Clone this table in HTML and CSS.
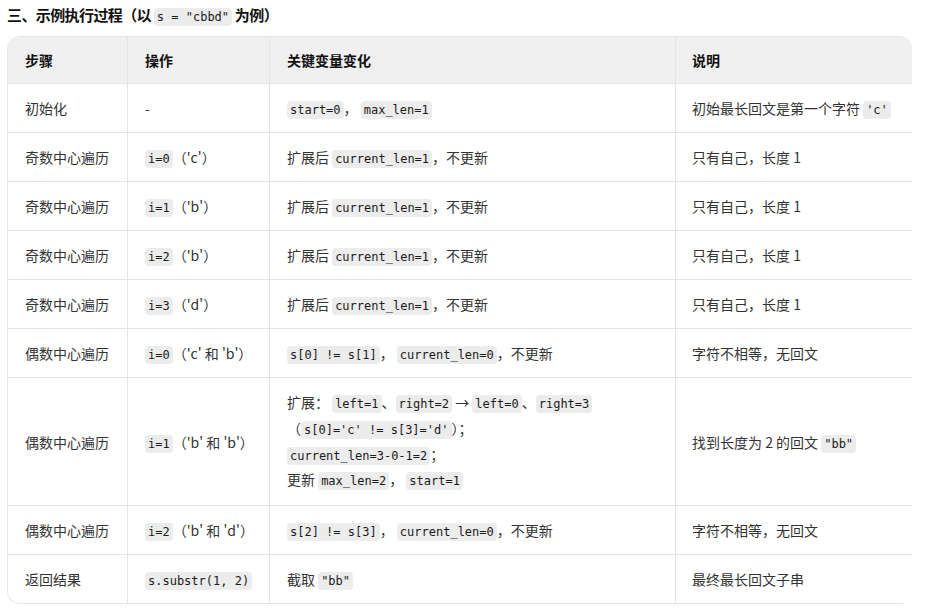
FILE: index.html
```html
<!DOCTYPE html>
<html lang="zh">
<head>
<meta charset="utf-8">
<link rel="stylesheet" href="styles.css">
</head>
<body>
<h3 class="title">三、示例执行过程（以 <code>s = "cbbd"</code> 为例）</h3>
<div class="wrap">
<table class="tbl">
<colgroup>
<col class="c1"><col class="c2"><col class="c3"><col class="c4">
</colgroup>
<thead>
<tr><th>步骤</th><th>操作</th><th>关键变量变化</th><th>说明</th></tr>
</thead>
<tbody>
<tr><td>初始化</td><td>-</td><td><code>start=0</code>， <code>max_len=1</code></td><td>初始最长回文是第一个字符 <code>'c'</code></td></tr>
<tr><td>奇数中心遍历</td><td><code>i=0</code>（'c'）</td><td>扩展后 <code>current_len=1</code>，不更新</td><td>只有自己，长度 1</td></tr>
<tr><td>奇数中心遍历</td><td><code>i=1</code>（'b'）</td><td>扩展后 <code>current_len=1</code>，不更新</td><td>只有自己，长度 1</td></tr>
<tr><td>奇数中心遍历</td><td><code>i=2</code>（'b'）</td><td>扩展后 <code>current_len=1</code>，不更新</td><td>只有自己，长度 1</td></tr>
<tr><td>奇数中心遍历</td><td><code>i=3</code>（'d'）</td><td>扩展后 <code>current_len=1</code>，不更新</td><td>只有自己，长度 1</td></tr>
<tr><td>偶数中心遍历</td><td><code>i=0</code>（'c' 和 'b'）</td><td><code>s[0] != s[1]</code>， <code>current_len=0</code>，不更新</td><td>字符不相等，无回文</td></tr>
<tr><td>偶数中心遍历</td><td><code>i=1</code>（'b' 和 'b'）</td><td class="multi">扩展： <code>left=1</code>、<code>right=2</code> → <code>left=0</code>、<code>right=3</code><br>（<code>s[0]='c' != s[3]='d'</code>）；<br><code>current_len=3-0-1=2</code>；<br>更新 <code>max_len=2</code>， <code>start=1</code></td><td>找到长度为 2 的回文 <code>"bb"</code></td></tr>
<tr><td>偶数中心遍历</td><td><code>i=2</code>（'b' 和 'd'）</td><td><code>s[2] != s[3]</code>， <code>current_len=0</code>，不更新</td><td>字符不相等，无回文</td></tr>
<tr><td>返回结果</td><td><code>s.substr(1, 2)</code></td><td>截取 <code>"bb"</code></td><td>最终最长回文子串</td></tr>
</tbody>
</table>
</div>
</body>
</html>
```
FILE: styles.css
```css
html, body {
  margin: 0;
  padding: 0;
  background: #ffffff;
}
body {
  padding: 0 7px;
  font-family: "Noto Sans CJK SC", "Noto Sans", sans-serif;
  font-size: 14px;
  color: #333333;
}
.title {
  margin: 0;
  padding-top: 4px;
  height: 36px;
  box-sizing: border-box;
  line-height: 22px;
  font-size: 15px;
  font-weight: 700;
  letter-spacing: -0.6px;
  color: #111111;
  overflow: hidden;
}
code {
  font-family: "DejaVu Sans Mono", "Liberation Mono", monospace;
  font-size: 12px;
  line-height: 1;
  letter-spacing: 0;
  background: #ececec;
  border-radius: 4px;
  padding: 2px 3px;
  color: #1a1a1a;
}
.title code {
  font-weight: 400;
}
.wrap {
  width: 905px;
  overflow: hidden;
  border-radius: 12px;
}
.tbl {
  border-collapse: separate;
  border-spacing: 0;
  border: 1px solid #e5e5e5;
  border-radius: 12px;
  table-layout: fixed;
  width: 940px;
}
.c1 { width: 120px; }
.c2 { width: 142px; }
.c3 { width: 406px; }
.c4 { width: 272px; }
th, td {
  text-align: left;
  vertical-align: middle;
  padding: 12px 17px;
  height: 24px;
  line-height: 24px;
  white-space: nowrap;
  border-right: 1px solid #e5e5e5;
  border-bottom: 1px solid #e5e5e5;
}
th {
  padding: 11px 17px;
  background: #f0f0f0;
  font-weight: 700;
  color: #111111;
}
th:last-child, td:last-child { border-right: none; }
tbody tr:last-child td { border-bottom: none; }
td:last-child, th:last-child { padding-left: 16px; }
thead th:first-child { border-top-left-radius: 11px; }
thead th:last-child { border-top-right-radius: 11px; }
td.multi {
  line-height: 25.75px;
}
```
